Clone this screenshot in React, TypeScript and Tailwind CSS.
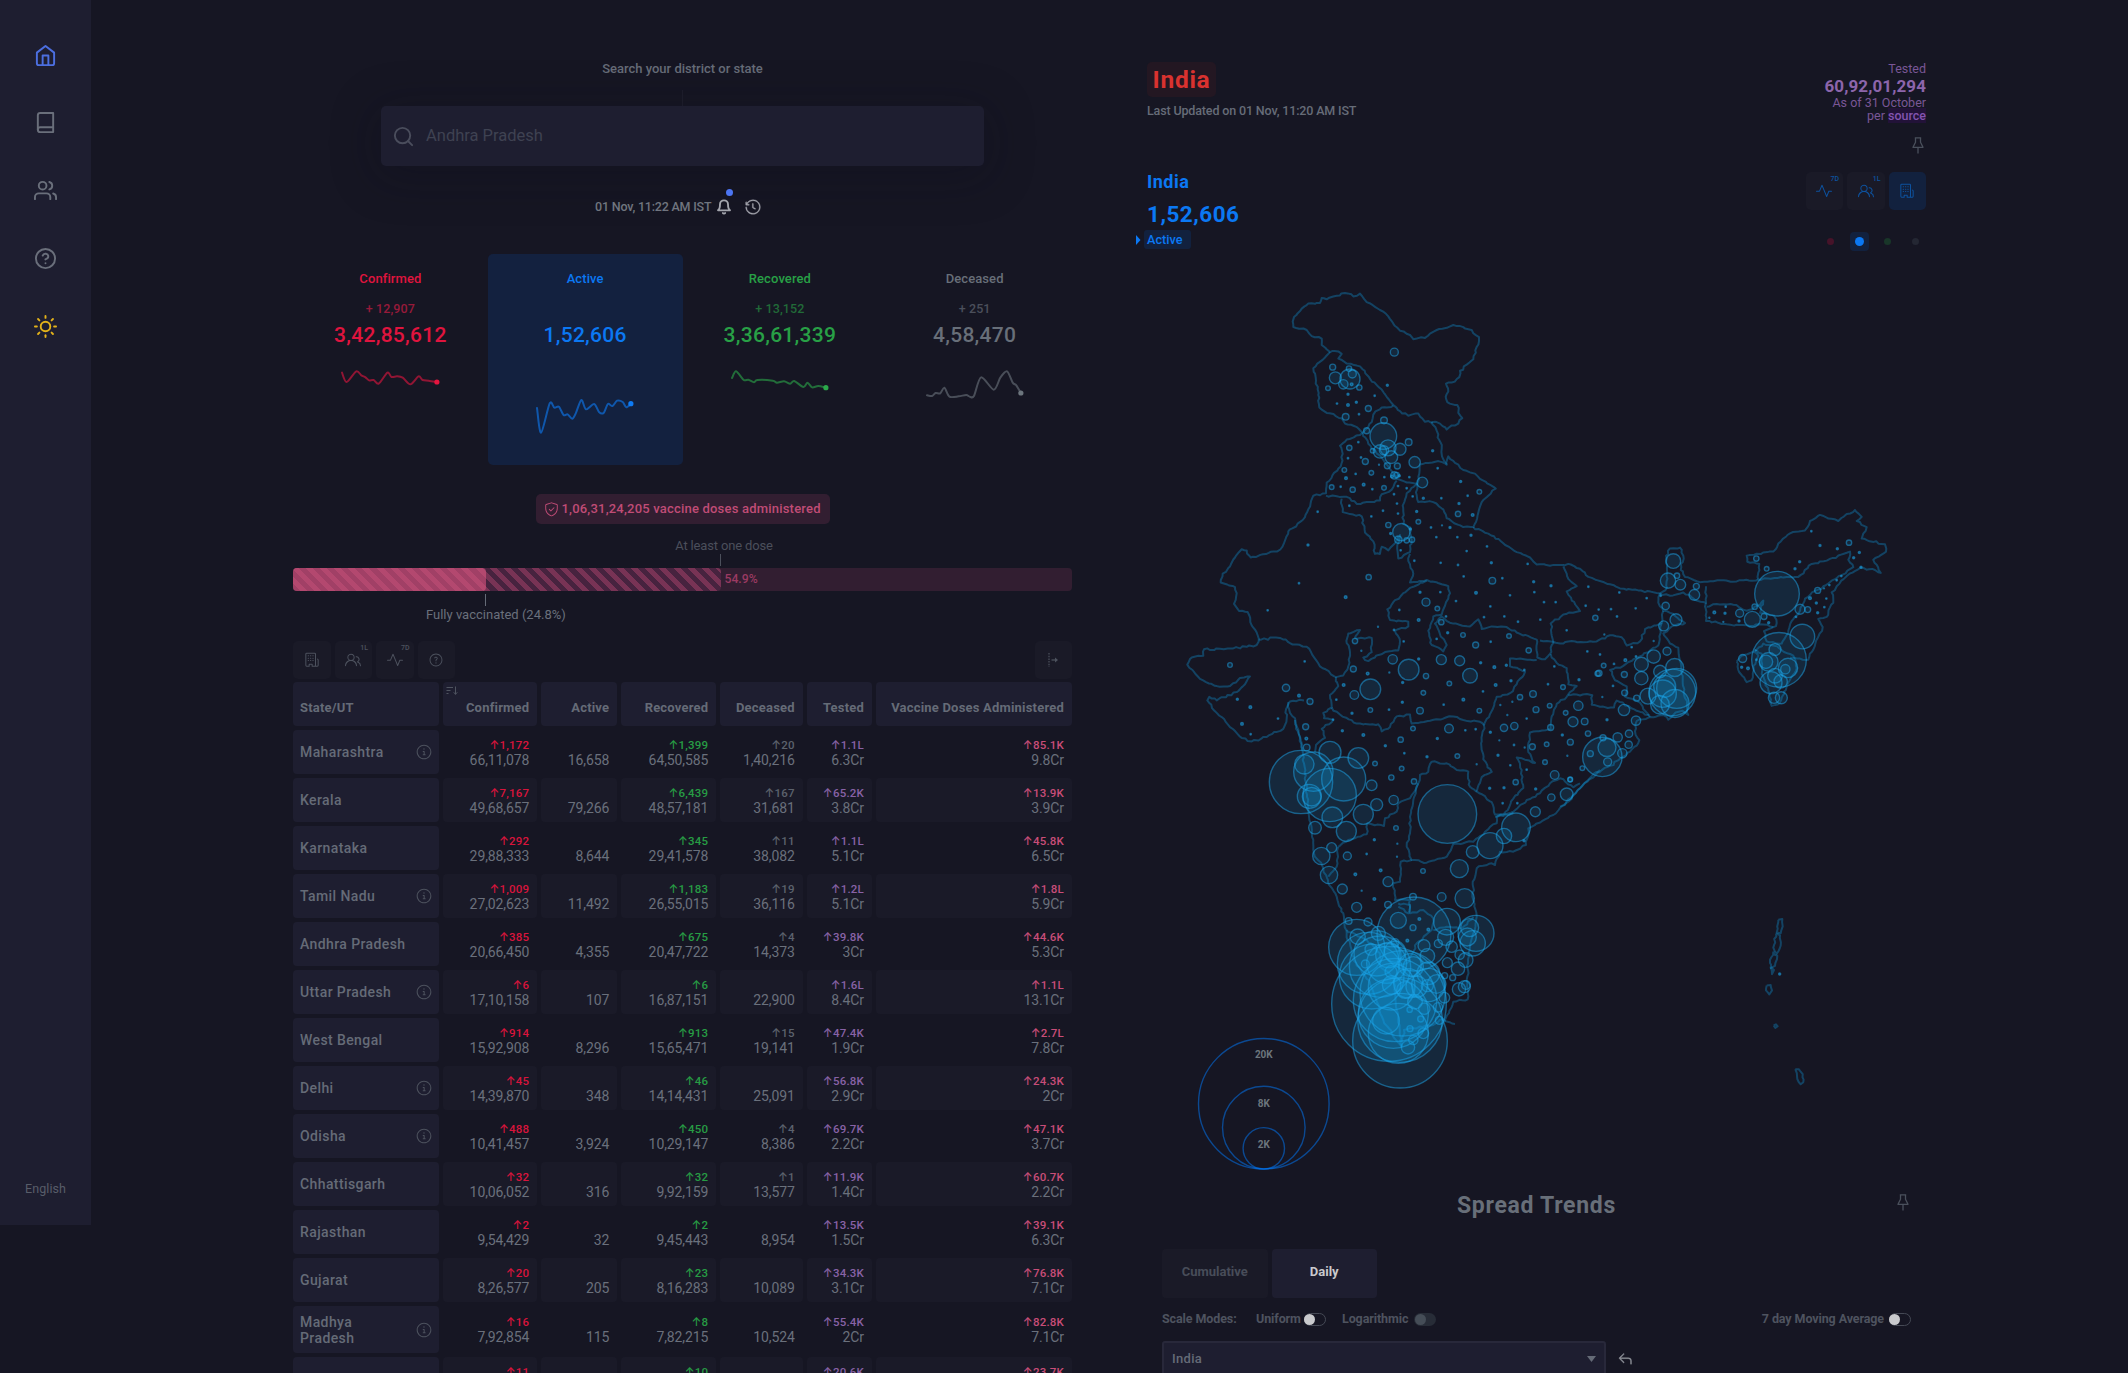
import React from "react";
import { FiBell, FiBook, FiHelpCircle, FiHome, FiSearch, FiSun, FiUsers } from "react-icons/fi";
import { GoHistory, GoInfo, GoOrganization, GoPeople, GoPulse, GoQuestion, GoReply, GoShieldCheck } from "react-icons/go";

type Pt = [number, number];
type Bubble = [number, number, number];

/* ---------- helpers ---------- */

function smooth(p: Pt[]): string {
  let d = `M${p[0][0]},${p[0][1]}`;
  for (let i = 0; i < p.length - 1; i++) {
    const a = p[Math.max(0, i - 1)];
    const b = p[i];
    const c = p[i + 1];
    const e = p[Math.min(p.length - 1, i + 2)];
    d += `C${b[0] + (c[0] - a[0]) / 7},${b[1] + (c[1] - a[1]) / 7} ${c[0] - (e[0] - b[0]) / 7},${c[1] - (e[1] - b[1]) / 7} ${c[0]},${c[1]}`;
  }
  return d;
}

function parse(s: string): Pt[] {
  return s.split(" ").map((q) => q.split(",").map(Number) as Pt);
}

function bubbles(s: string): Bubble[] {
  return s.split(" ").map((q) => q.split(",").map(Number) as Bubble);
}

/* Adds a small deterministic wobble so borders read as natural coastlines. */
function rough(points: Pt[]): string {
  let seed = 7;
  const rnd = () => {
    seed = (seed * 16807) % 2147483647;
    return seed / 2147483647 - 0.5;
  };
  let d = `M${points[0][0].toFixed(1)},${points[0][1].toFixed(1)}`;
  for (let i = 1; i < points.length; i++) {
    const [x0, y0] = points[i - 1];
    const [x1, y1] = points[i];
    const len = Math.hypot(x1 - x0, y1 - y0);
    const n = Math.max(1, Math.round(len / 3.2));
    for (let k = 1; k <= n; k++) {
      const t = k / n;
      const j = k === n ? 0 : 2;
      d += `L${(x0 + (x1 - x0) * t + rnd() * j).toFixed(1)},${(y0 + (y1 - y0) * t + rnd() * j).toFixed(1)}`;
    }
  }
  return d;
}

/* ---------- map data: each region has its own local grid ---------- */

const regions = [
  {
    ox: 1180,
    oy: 270,
    sy: 2.8,
    lines: [
      "340,152 342,132 365,108 385,94 420,92 425,78 440,82 470,72 495,64 520,74 540,66 560,90 600,112 625,130 640,150 660,170 690,182 700,194 735,190 750,178 770,168 820,154 850,160 875,168 897,188 890,215 880,250 860,265 840,282 838,300 815,315 798,318 805,340 797,355 802,370 832,378 835,400 847,415 835,430 815,435 800,447 780,430 765,425 735,425 715,402 685,408 660,395 640,378 620,355 605,335 570,305 540,270 500,262 475,248 485,235 475,228 450,230 425,210 425,192 395,185 380,168 340,160 340,152",
      "450,230 435,245 412,262 400,275 408,310 415,350 418,385 440,400 485,415 495,430 530,440 548,455 565,440 578,415 580,405 605,385 640,380",
      "548,455 540,462 500,475 480,492 488,515 482,550 440,595 438,625 400,632 385,670 368,700 325,732 312,765 292,788 212,805 200,785 185,782 165,805 150,830 128,850 122,875 165,888 170,905 162,935 178,955 203,958 215,995 230,1015 236,1040 230,1050 200,1055 150,1060 72,1062 70,1080 35,1085 22,1105 60,1145 110,1165 150,1165 180,1142 210,1138 195,1160 170,1182 110,1205 88,1195 82,1205 110,1240 150,1280 185,1310 215,1320 260,1308 310,1285 320,1255 318,1230 330,1208 372,1205",
      "325,1210 330,1240 345,1255 348,1285 360,1310 366,1345",
      "548,455 575,500 600,520 615,540 640,570 650,585 680,595 712,598 718,570 720,545 745,540 775,535 800,545 790,530 785,500 770,450 755,425",
      "438,632 500,635 530,655 560,650 600,645 605,628 635,615 650,590",
      "800,545 805,522 825,540 850,560 885,570 900,585 947,612 925,632 905,650 895,680 880,720 850,720 800,695 790,670 760,650 715,650 710,630 712,600",
      "485,640 488,678 520,685 545,690 555,735 580,760 585,795 600,795 605,775 625,785 645,765 655,745",
      "712,598 680,625 668,660 670,710 690,720 695,755 690,790 655,808 652,770 660,740",
      "690,795 685,815 700,850 690,875 740,868 785,880 805,885 810,905 795,940 785,965 760,970 745,1010 755,1050 790,1068 800,1050 780,1020 765,990 785,970 820,990 870,998 895,978 905,1005 935,998 980,1000 1010,1015 1070,1035 1072,1085 1095,1090 1110,1075 1120,1045 1112,990 1150,965 1200,955 1160,900 1190,885 1165,865 1150,830",
      "880,720 925,738 970,765 1010,790 1050,805 1070,825 1110,828 1152,826",
      "740,870 690,890 640,930 622,950 630,980 685,985 685,998 645,1010 660,1040 655,1065 615,1070 565,1095 550,1085 575,1070 575,1030 525,1030 540,1008 505,1018 500,1045 510,1070 505,1110 490,1135 468,1140 420,1110 380,1055 330,1045 300,1030 236,1035",
      "468,1140 475,1165 450,1190 455,1225 430,1240 432,1255 460,1260 425,1285 435,1310 408,1330 405,1350",
      "455,1225 480,1245 530,1270 595,1272 605,1292 630,1280 650,1250 690,1245 695,1270 750,1262 820,1250 850,1260 900,1265 912,1275",
      "912,1275 935,1235 950,1195 990,1185 1010,1160 1035,1125 990,1110 990,1088 1070,1092",
      "1112,1075 1130,1100 1160,1115 1165,1160 1190,1165 1160,1195 1130,1215 1115,1250 1112,1285 1050,1295 1045,1350 1065,1380 1010,1365 1025,1400 1030,1450 1000,1480 970,1525 945,1525 935,1490 890,1460 905,1420 935,1405 910,1370 905,1320 912,1275",
    ],
    bubbles: bubbles(
      "643,230,12 622,323,5 584,352,4 458,272,9 507,276,8 466,302,18 510,305,30 517,291,12 490,320,14 515,320,6 538,329,8 444,331,7 504,348,5 471,374,4 504,378,6 529,370,5 565,388,9 537,404,4 497,411,10 612,421,10 560,450,9 610,465,40 624,498,24 600,508,20 634,524,19 660,502,18 578,506,7 612,505,14 686,482,10 704,538,17 727,595,16 758,506,5 773,555,4 508,498,8 535,482,4 504,527,4 543,525,4 556,536,9 597,545,3 622,548,9 652,549,9 493,560,7 527,571,4 498,583,6 574,568,7 643,575,11 650,574,8 658,576,5 613,580,4 636,578,6 688,580,4 482,607,4 455,608,7 518,615,8 551,601,6 577,614,4 612,610,7 654,605,4 680,611,4 842,592,5 898,621,7 863,632,4 784,639,4 730,639,5 698,634,4 837,654,5 878,686,6 834,683,8 642,628,4 508,660,4 651,654,4 609,674,4 654,682,4 710,676,5 574,690,4 413,677,4 715,705,7 625,714,8 664,734,26 655,755,11 680,757,8 696,755,8 632,738,5 691,725,5 786,715,3 810,721,5 753,721,4 769,748,4 832,748,4 873,743,5 921,774,4 860,787,4 703,814,4 662,785,4 384,770,5 357,877,4 263,953,4 566,860,8 497,916,6 782,820,4 834,826,4 934,820,5 1043,823,4 851,858,4 937,870,10 967,863,4 1061,873,5 1113,884,5 888,904,6 990,911,4 1063,902,4 1092,930,4 1127,930,4 931,942,4 828,927,4 781,902,4 720,902,5 738,930,12 658,952,4 772,948,7 716,980,6 784,986,8 798,970,4 912,972,4 973,970,4 1014,985,4 1081,979,4 1225,887,4 1217,940,4 1246,974,8 1160,1009,4 1222,1068,4 1253,1130,8 987,1025,7 932,1041,4 887,1050,9 849,1022,7 803,1016,5 770,1033,4 594,999,3 671,1040,4 642,1008,4 525,1039,8 544,1066,3 374,1096,4 150,1106,7 1046,1065,8 716,1089,5 638,1090,14 784,1091,15 839,1094,15 902,1100,5 943,1112,6 979,1107,5 1033,1120,4 1123,1110,4 520,1117,9 563,1130,6 628,1127,3 686,1119,31 738,1137,8 870,1136,22 993,1150,5 947,1162,6 1104,1160,4 1149,1168,7 1197,1147,5 808,1158,7 668,1155,5 491,1162,6 571,1174,31 523,1190,13 469,1203,4 318,1170,11 172,1202,5 357,1192,6 390,1208,9 211,1224,6 186,1271,6 294,1256,4 212,1300,4 730,1184,7 909,1180,4 850,1203,6 667,1210,5 791,1217,4 1020,1196,8 1059,1187,10 997,1209,3 961,1218,3 898,1234,7 720,1234,10 627,1231,4 571,1232,7 516,1241,5 459,1259,4 1068,1231,9 1109,1220,7 1195,1220,14 1157,1240,7 1179,1265,15 1214,1264,10 1040,1256,4 982,1246,3 1003,1277,11 972,1282,11 1112,1281,9 1147,1302,5 1224,1298,8 1171,1322,9 1162,1360,3 1100,1328,7 1057,1335,9 1034,1337,3 1002,1330,4 958,1317,3 931,1294,5 887,1286,4 856,1289,4 807,1284,13 699,1284,7 772,1312,5 662,1315,8 616,1332,5 550,1302,6 487,1290,5 377,1279,9 379,1312,6 380,1337,10 673,1353,4 741,1363,5 832,1361,7 890,1384,3 954,1359,5 991,1387,4 1095,1378,7 1040,1399,4 665,1396,7 585,1382,7 634,1421,8 702,1432,8 929,1451,5 972,1450,5 1007,1434,8 1067,1453,5 1170,1427,7 1124,1414,13 1160,1468,19 1114,1477,11 1066,1517,15 1012,1493,4 968,1493,4 1207,1395,7"
    ),
  },
  {
    ox: 1560,
    oy: 470,
    sy: 2.45,
    lines: [
      "12,234 25,230 60,242 85,262 150,280 180,290 235,295 300,302 320,290",
      "322,290 318,210 330,192 360,190 370,210 362,245 375,262 420,275 480,270 530,273 595,268",
      "595,268 598,230 562,225 560,210 590,205 640,200 655,180 690,155 735,148 750,125 780,110 835,125 860,108 885,98 905,115 890,125 920,140 905,168 975,182 978,200 940,220 962,252 945,245 900,240 860,260 830,285 815,300 820,325 800,360 775,365 788,385 760,440 745,465 720,462 690,460",
      "595,268 680,262 715,262 755,230 800,222 870,200 865,220 880,238 830,265 790,285 735,315 720,345 695,370 685,400 665,425 620,420 612,395 640,385 650,375 640,355",
      "300,302 330,308 370,300 410,320 438,325 438,285",
      "440,335 470,328 520,330 560,345 600,330 610,320 600,350 640,355",
      "438,325 438,370 500,378 570,382 600,378 640,385",
      "530,470 545,455 580,445 595,455 580,480 575,515 560,520 535,490 530,470",
      "590,440 605,450 605,500 625,540 635,578 660,570 680,530 710,485 700,455 640,430 610,425 590,440",
      "300,302 295,325 310,345 330,350 375,375 345,380 310,400 330,425 355,435 358,460 368,520 385,600 368,590 340,600 325,612 310,600 270,605 230,615 225,640 238,662 210,690 150,725 100,745 60,780 20,815 0,825",
      "310,345 305,375 255,390 240,420 200,430 185,410 150,405 110,420 70,422 25,420 0,425 -60,418",
      "305,375 295,430 230,460 190,480 150,490 165,515 200,530 195,555 240,570 270,605",
      "268,600 230,590 170,565 162,582 120,580 95,575 97,552 50,550 25,552",
      "655,1102 667,1100 668,1118 662,1135 650,1133 655,1102",
      "648,1135 660,1140 662,1165 650,1185 640,1170 648,1135",
      "640,1180 652,1190 645,1215 632,1220 630,1200 640,1180",
      "632,1218 642,1225 636,1235 632,1218",
      "620,1263 632,1262 636,1275 628,1285 618,1275 620,1263",
      "641,1361 648,1358 653,1363 646,1367 641,1361",
      "706,1468 716,1468 728,1480 730,1500 722,1505 712,1492 706,1468",
    ],
    bubbles: bubbles(
      "340,223,22 324,271,23 361,281,16 351,259,8 403,306,16 409,285,9 317,333,11 348,367,18 311,382,15 302,308,4 260,314,4 178,300,4 116,342,4 153,341,4 227,339,4 171,359,4 133,403,3 215,434,4 281,419,3 228,457,4 120,452,4 196,466,6 162,475,4 131,479,7 117,498,9 193,501,9 159,529,4 127,556,3 194,546,9 230,559,9 141,612,5 192,588,17 228,614,14 129,656,9 173,655,14 207,646,11 206,673,11 187,694,14 127,703,59 141,680,27 91,695,9 143,715,12 31,758,7 244,476,21 281,457,20 321,444,12 244,510,20 344,484,27 300,494,19 264,554,24 314,530,33 308,548,41 300,575,28 337,545,70 350,535,60 345,572,42 618,470,20 587,442,4 589,217,8 620,242,7 719,225,5 705,242,5 754,150,4 780,185,5 832,193,5 867,178,8 898,202,5 881,215,5 903,238,5 844,260,4 830,270,4 808,282,4 792,290,3 773,295,9 750,314,6 799,315,4 793,336,4 769,326,5 773,350,5 743,342,9 720,341,15 708,360,4 651,303,67 584,335,8 577,366,24 612,359,9 626,374,5 539,351,12 537,370,5 495,351,5 497,335,4 490,372,3 463,349,6 448,362,3 727,408,37 657,465,82 645,440,18 626,470,28 548,462,12 545,483,5 564,486,6 589,465,4 684,485,29 676,488,14 633,521,33 645,504,22 662,518,20 642,558,17 664,558,18 659,1235,5"
    ),
  },
  {
    ox: 1180,
    oy: 700,
    sy: 3,
    lines: [
      "345,60 360,110 372,190 385,330 395,400 402,460 430,505 445,550 470,590 490,640 500,700 520,780 570,850 610,960 640,1010 665,1040 672,990 700,985 760,975 790,958 825,972",
      "795,965 820,905 863,898 862,850 865,760 880,700 890,650 880,600 878,545 890,505 935,490 945,495 960,455 1000,455 1038,435 1045,385 1120,345 1200,265 1260,210",
      "475,440 505,420 560,403 562,370 612,378 615,355 650,335 655,310 690,295 715,250 720,225 745,215 755,185 800,190 830,210 865,215 870,260 890,275",
      "715,250 700,300 690,350 690,400 680,440 695,480 740,488 800,470 820,432 880,425 915,395 950,370 950,350 1000,340",
      "695,480 662,485 660,545 640,550 645,600 690,600 690,640 730,630 760,655 755,690 710,730 700,755 680,790 650,800",
      "655,610 690,615 685,640 655,620",
      "945,350 1000,335 1040,300 1080,280 1110,250 1140,235 1180,262 1200,250",
      "475,440 470,500 445,530",
      "500,690 560,720 600,760 600,800 640,830 650,930 665,1040",
      "760,690 800,680 845,685 880,650",
    ],
    bubbles: bubbles(
      "363,246,95 400,215,59 373,193,29 450,157,33 535,174,31 491,237,66 449,285,80 388,289,36 395,290,28 457,352,31 499,394,30 550,343,30 575,256,16 590,314,18 641,300,14 405,383,19 455,443,15 424,468,26 502,468,12 447,525,26 487,567,15 530,622,15 583,419,5 648,384,7 652,431,3 560,462,4 651,470,3 526,523,6 602,511,6 545,572,3 583,597,6 624,545,15 729,513,7 624,614,10 699,590,10 785,591,13 802,342,88 838,506,27 878,456,19 930,437,39 972,408,23 1008,382,43 1032,422,5 854,595,29 801,665,40 702,702,111 655,661,24 718,657,6 699,683,9 745,689,6 682,722,6 506,663,10 564,666,12 888,700,54 869,683,27 878,730,38 862,711,27 797,712,24 732,737,18 775,731,12 815,740,17 742,768,22 839,764,14 857,780,22 802,788,15 834,806,20 794,827,9 818,833,9 837,868,20 853,860,18 858,855,13 745,820,34 770,852,28 793,893,16 733,926,17 774,922,14 778,961,12 722,957,9 689,929,8 690,986,9 730,1000,16 700,1020,14 684,1042,20 742,857,18 530,742,84 533,710,23 595,700,21 645,728,12 556,792,12 573,748,18 565,790,93 600,800,92 575,830,97 590,760,68 625,765,38 645,755,32 690,795,34 700,800,30 620,790,60 633,815,18 627,912,172 645,900,125 668,880,128 660,960,127 640,940,105 655,1000,90 635,860,70 635,855,28 685,850,44 675,870,25 618,962,40 660,1022,142 710,860,32 745,855,50 705,905,22"
    ),
  },
];

function IndiaMap() {
  return (
    <svg className="block h-[913px] w-[779px] overflow-visible" viewBox="1147 262 779 913">
      <g fill="none" stroke="#10a0e6" strokeOpacity="0.33" strokeWidth="2" strokeLinejoin="round">
        {regions.map((r, i) =>
          r.lines.map((l, j) => (
            <path key={`${i}-${j}`} d={rough(parse(l).map(([x, y]) => [r.ox + x / 3, r.oy + y / r.sy] as Pt))} />
          ))
        )}
      </g>
      <g fill="#10a8f0" fillOpacity="0.125" stroke="#1ea8ec" strokeOpacity="0.5" strokeWidth="1.4">
        {regions.map((r, i) =>
          r.bubbles.map(([x, y, s], j) => (
            <circle
              key={`${i}-${j}`}
              cx={r.ox + x / 3}
              cy={r.oy + y / r.sy}
              r={s < 7 ? Math.max(0.5, s / 3 - 0.6) : s / 3}
              fillOpacity={s < 7 ? 0.4 : undefined}
            />
          ))
        )}
      </g>
      <g fill="none" stroke="#007bff" strokeOpacity="0.5" strokeWidth="1.4">
        <circle cx="1263.8" cy="1103.8" r="65.3" />
        <circle cx="1263.8" cy="1127.6" r="41.3" />
        <circle cx="1263.8" cy="1148.3" r="20.7" />
      </g>
      <g className="font-['Roboto',sans-serif] text-[10px] font-bold" fill="#6c757d" textAnchor="middle">
        <text x="1263.8" y="1058">20K</text>
        <text x="1263.8" y="1106.5">8K</text>
        <text x="1263.8" y="1147.8">2K</text>
      </g>
    </svg>
  );
}

/* ---------- small parts ---------- */

function Spark({ data, color }: { data: string; color: string }) {
  const raw = parse(data);
  const x0 = raw[0][0];
  const pts = raw.map(([x, y]) => [(x - x0) / 1.96 + 2, (y - 1005) / 3] as Pt);
  const end = pts[pts.length - 1];
  return (
    <svg className="mt-[18px] block h-[75px] w-[100px]" viewBox="0 0 100 75">
      <path d={smooth(pts)} fill="none" stroke={color} strokeOpacity="0.6" strokeWidth="2" strokeLinecap="round" />
      <circle cx={end[0]} cy={end[1]} r="2.6" fill={color} />
    </svg>
  );
}

function Pin() {
  return (
    <svg width="12" height="17" viewBox="0 0 12 17" fill="none" stroke="#4a505c" strokeWidth="1.3" strokeLinejoin="round">
      <path d="M2.800 .8h6.400M3.500 .8v4.400L1 10.300h10L8.500 5.200V.8M6 10.500V16.500" />
    </svg>
  );
}

const stats = [
  { name: "Confirmed", delta: "+ 12,907", total: "3,42,85,612", color: "#e5153f", text: "text-[#e0143e]", dim: "text-[#961a3a]", bg: "",
    data: "122,1028 131,1056 150,1024 160,1036 168,1042 175,1051 184,1050 194,1061 211,1028 219,1041 230,1039 241,1043 256,1063 272,1039 280,1050 292,1052 308,1056" },
  { name: "Active", delta: "", total: "1,52,606", color: "#0e7bf5", text: "text-[#0b78f3]", dim: "", bg: "bg-[#13213f]",
    data: "506,1134 514,1208 531,1120 540,1133 549,1130 558,1155 566,1153 575,1166 582,1150 593,1110 602,1138 618,1122 628,1147 637,1148 645,1122 654,1128 663,1112 674,1116 681,1132 690,1121" },
  { name: "Recovered", delta: "+ 13,152", total: "3,36,61,339", color: "#2ba84a", text: "text-[#28a046]", dim: "text-[#216a38]", bg: "",
    data: "886,1044 894,1024 909,1050 918,1049 929,1057 936,1050 966,1052 974,1058 988,1054 1000,1061 1008,1053 1026,1071 1034,1058 1043,1072 1055,1068 1070,1073" },
  { name: "Deceased", delta: "+ 251", total: "4,58,470", color: "#6c757d", text: "text-[#686f79]", dim: "text-[#4b4f5b]", bg: "",
    data: "1268,1096 1278,1098 1285,1089 1294,1090 1302,1073 1312,1100 1330,1099 1345,1095 1352,1100 1360,1098 1374,1042 1399,1079 1412,1042 1425,1024 1436,1058 1443,1066 1452,1089" },
];

/* state | info | confirmed | active | recovered | deceased | tested | vaccines */
const rows: string[][] = [
  ["Maharashtra", "i", "1,172", "66,11,078", "16,658", "1,399", "64,50,585", "20", "1,40,216", "1.1L", "6.3Cr", "85.1K", "9.8Cr"],
  ["Kerala", "", "7,167", "49,68,657", "79,266", "6,439", "48,57,181", "167", "31,681", "65.2K", "3.8Cr", "13.9K", "3.9Cr"],
  ["Karnataka", "", "292", "29,88,333", "8,644", "345", "29,41,578", "11", "38,082", "1.1L", "5.1Cr", "45.8K", "6.5Cr"],
  ["Tamil Nadu", "i", "1,009", "27,02,623", "11,492", "1,183", "26,55,015", "19", "36,116", "1.2L", "5.1Cr", "1.8L", "5.9Cr"],
  ["Andhra Pradesh", "", "385", "20,66,450", "4,355", "675", "20,47,722", "4", "14,373", "39.8K", "3Cr", "44.6K", "5.3Cr"],
  ["Uttar Pradesh", "i", "6", "17,10,158", "107", "6", "16,87,151", "", "22,900", "1.6L", "8.4Cr", "1.1L", "13.1Cr"],
  ["West Bengal", "", "914", "15,92,908", "8,296", "913", "15,65,471", "15", "19,141", "47.4K", "1.9Cr", "2.7L", "7.8Cr"],
  ["Delhi", "i", "45", "14,39,870", "348", "46", "14,14,431", "", "25,091", "56.8K", "2.9Cr", "24.3K", "2Cr"],
  ["Odisha", "i", "488", "10,41,457", "3,924", "450", "10,29,147", "4", "8,386", "69.7K", "2.2Cr", "47.1K", "3.7Cr"],
  ["Chhattisgarh", "", "32", "10,06,052", "316", "32", "9,92,159", "1", "13,577", "11.9K", "1.4Cr", "60.7K", "2.2Cr"],
  ["Rajasthan", "", "2", "9,54,429", "32", "2", "9,45,443", "", "8,954", "13.5K", "1.5Cr", "39.1K", "6.3Cr"],
  ["Gujarat", "", "20", "8,26,577", "205", "23", "8,16,283", "", "10,089", "34.3K", "3.1Cr", "76.8K", "7.1Cr"],
  ["Madhya Pradesh", "i", "16", "7,92,854", "115", "8", "7,82,215", "", "10,524", "55.4K", "2Cr", "82.8K", "7.1Cr"],
  ["Haryana", "", "11", "7,71,252", "126", "10", "7,61,077", "", "10,049", "20.6K", "1.3Cr", "23.7K", "2.5Cr"],
];

const headers = ["Confirmed", "Active", "Recovered", "Deceased", "Tested", "Vaccine Doses Administered"];
const gridCols = "grid grid-cols-[146px_94.300px_76px_95px_82.500px_65.200px_1fr] gap-x-1";

function Cell({ delta, value, color, shade }: { delta?: string; value: string; color?: string; shade: boolean }) {
  return (
    <div className={`flex flex-col items-end justify-center rounded-[4px] pr-2 ${shade ? "bg-[#1a1a28]" : ""}`}>
      <span className={`h-[14px] text-[11.5px] font-medium leading-[14px] tracking-[0.2px] ${color ?? ""}`}>{delta ? `↑${delta}` : ""}</span>
      <span className="h-[15px] text-[14px] leading-[16px] tracking-[-0.1px] text-[#6a707c]">{value}</span>
    </div>
  );
}

function ToolButton({ children, tag, blue, on, right }: { children?: React.ReactNode; tag?: string; blue?: boolean; on?: boolean; right?: boolean }) {
  return (
    <div
      className={`relative flex h-[38px] w-[37.500px] shrink-0 items-center justify-center rounded-[5px] ${on ? "bg-[#12213e]" : "bg-[#1a1a27]"} ${blue ? "text-[#0d529f]" : "text-[#4d525e]"} ${right ? "ml-auto" : ""}`}
    >
      {children}
      {tag && <span className="absolute right-[4px] top-[3px] text-[7px] font-medium leading-[9px]">{tag}</span>}
    </div>
  );
}

function Toggle({ muted }: { muted?: boolean }) {
  return muted ? (
    <span className="flex h-[13px] w-[22px] shrink-0 items-center rounded-full bg-[#272c37] pl-px">
      <span className="h-[11px] w-[11px] rounded-full bg-[#454d57]" />
    </span>
  ) : (
    <span className="flex h-[13px] w-[22px] shrink-0 items-center rounded-full border-[1.500px] border-[#454955]">
      <span className="-ml-px h-[11px] w-[11px] shrink-0 rounded-full bg-[#c9cacd]" />
    </span>
  );
}

/* ---------- page ---------- */

function Sidebar() {
  return (
    <nav className="flex h-[1225px] w-[91px] shrink-0 flex-col items-center bg-[#1e1e30] pt-[43.500px] text-[#6a6f7b]">
      <FiHome size={23} className="mb-[44.800px] shrink-0 text-[#4c6fe0]" />
      <FiBook size={23} className="mb-[44.800px] shrink-0" />
      <FiUsers size={23} className="mb-[44.800px] shrink-0" />
      <FiHelpCircle size={23} className="mb-[44.800px] shrink-0" />
      <FiSun size={23} className="shrink-0 text-[#e3b21a]" />
      <span className="mb-[26px] mt-auto text-[12.500px] leading-5 tracking-[0.1px] text-[#585d69]">English</span>
    </nav>
  );
}

function LeftColumn() {
  return (
    <section className="ml-[202px] flex w-[779px] shrink-0 flex-col pt-[59px] [&>*]:shrink-0">
      <div className="h-5 text-center text-[13px] font-medium leading-5 text-[#666c78]">Search your district or state</div>
      <div className="mx-auto mt-[11px] h-4 w-px bg-[#1e1e2c]" />
      <div className="mx-auto flex h-[60px] w-[603px] items-center rounded-[5px] bg-[#1e1e30] pl-[11px] shadow-[0_7px_45px_8px_rgba(15,15,28,0.22)]">
        <FiSearch size={23} className="text-[#4a4d5c]" />
        <span className="ml-[11px] text-[16.500px] text-[#3f4252]">Andhra Pradesh</span>
      </div>
      <div className="mt-[31px] flex h-5 items-center pl-[302px] text-[12.500px] font-medium leading-5 tracking-[-0.2px] text-[#70757f]">
        <span className="w-[114px] whitespace-nowrap">01 Nov, 11:22 AM IST</span>
        <span className="relative ml-[7px]">
          <FiBell size={16} strokeWidth={2.8} className="text-[#a3a5ad]" />
          <span className="absolute -right-px -top-[10px] h-[7px] w-[7px] rounded-full bg-[#4c75f2]" />
        </span>
        <GoHistory size={16} strokeWidth={0.5} className="ml-[13px] text-[#a3a5ad]" />
      </div>

      <div className="mt-[37px] grid h-[211px] grid-cols-4">
        {stats.map((s) => (
          <div key={s.name} className={`flex flex-col items-center rounded-[5px] pt-[17px] ${s.bg}`}>
            <span className={`h-4 text-[13px] font-medium leading-4 tracking-[0.1px] ${s.text}`}>{s.name}</span>
            <span className={`mt-[14px] h-4 text-[12.500px] font-medium leading-4 tracking-[0.1px] ${s.dim}`}>{s.delta}</span>
            <span className={`mt-[6px] h-6 text-[21px] font-medium leading-6 tracking-[0.3px] ${s.text}`}>{s.total}</span>
            <Spark data={s.data} color={s.color} />
          </div>
        ))}
      </div>

      <div className="mx-auto mt-[29px] flex h-[30px] w-[294px] items-center rounded-[5px] bg-[#321e31] pl-2 text-[#c04c76]">
        <GoShieldCheck size={15} />
        <span className="ml-[3px] whitespace-nowrap text-[13px] font-medium tracking-[0.2px]">1,06,31,24,205 vaccine doses administered</span>
      </div>
      <div className="ml-[378px] mt-[14px] h-4 w-[106px] text-center text-[13px] leading-4 tracking-[-0.150px] text-[#4b4f5b]">At least one dose</div>
      <div className="ml-[427px] h-[12px] w-px bg-[#4b4f5b]" />
      <div className="mt-[2px] flex h-[23px] w-full rounded-[4px] bg-[#321e31]">
        <div className="h-full w-[427.500px] rounded-[4px] bg-[repeating-linear-gradient(45deg,#47233f,#47233f_5px,#783355_5px,#783355_10px)]">
          <div className="h-full w-[193px] rounded-[4px] bg-[repeating-linear-gradient(45deg,#a14066,#a14066_5px,#b3486f_5px,#b3486f_10px)]" />
        </div>
        <span className="ml-1 text-[12.200px] font-medium leading-[23px] text-[#9b3a62]">54.9%</span>
      </div>
      <div className="ml-[192px] mt-[3px] h-3 w-px bg-[#656b77]" />
      <div className="ml-[123px] mt-px h-4 w-[160px] whitespace-nowrap pl-[10px] text-[13px] leading-4 text-[#6a707c]">Fully vaccinated (24.8%)</div>

      <div className="mt-[18px] flex h-[38px] gap-[4px]">
        <ToolButton><GoOrganization size={16} /></ToolButton>
        <ToolButton tag="1L"><GoPeople size={16} /></ToolButton>
        <ToolButton tag="7D"><GoPulse size={16} /></ToolButton>
        <ToolButton><GoQuestion size={14} /></ToolButton>
        <ToolButton right>
          <svg width="12" height="16" viewBox="0 0 12 16" fill="none" stroke="currentColor">
            <path d="M2 1v14" strokeDasharray="1.5 1.2" strokeWidth="1.2" />
            <path d="M4.500 8h5.500" strokeWidth="1.3" />
            <path d="M8 5.500L11 8 8 10.500z" fill="currentColor" stroke="none" />
          </svg>
        </ToolButton>
      </div>

      <div className={`mt-[3px] h-[44px] ${gridCols} text-[13px] font-bold text-[#656b77]`}>
        <div className="flex items-end rounded-[4px] bg-[#1e1e30] pb-[8px] pl-[7px] leading-5 tracking-[0.2px]">State/UT</div>
        {headers.map((h, i) => (
          <div key={h} className="relative flex items-end justify-end rounded-[4px] bg-[#1e1e30] pb-[8px] pr-2 leading-5 tracking-[0.2px]">
            {i === 0 && (
              <svg className="absolute left-[3px] top-[4px]" width="12" height="9" viewBox="0 0 12 9" fill="none" stroke="#4f5460" strokeWidth="1">
                <path d="M.5 1.500h6.500M.5 4.500h4M.5 7.500h2M9.500 .5v8M7.700 6.300l1.800 2 1.800-2" />
              </svg>
            )}
            <span className="whitespace-nowrap">{h}</span>
          </div>
        ))}
      </div>
      {rows.map((r, i) => {
        const shade = i % 2 === 1;
        return (
          <div key={r[0]} className={`mt-1 ${i === 12 ? "h-[47px]" : "h-[44px]"} ${gridCols}`}>
            <div className="flex items-center justify-between rounded-[4px] bg-[#1e1e30] pl-[7px] pr-[7px] text-[14px] font-medium leading-4 tracking-[0.400px] text-[#656b77]">
              <span className={i === 12 ? "w-[70px]" : "whitespace-nowrap"}>{r[0]}</span>
              {r[1] && <GoInfo size={16} className="text-[#4d525e]" />}
            </div>
            <Cell delta={r[2]} value={r[3]} color="text-[#d8143c]" shade={shade} />
            <Cell value={r[4]} shade={shade} />
            <Cell delta={r[5]} value={r[6]} color="text-[#279c44]" shade={shade} />
            <Cell delta={r[7]} value={r[8]} color="text-[#5c626d]" shade={shade} />
            <Cell delta={r[9]} value={r[10]} color="text-[#8862a6]" shade={shade} />
            <Cell delta={r[11]} value={r[12]} color="text-[#c84d78]" shade={shade} />
          </div>
        );
      })}
    </section>
  );
}

function RightColumn() {
  return (
    <section className="ml-[75px] flex w-[779px] shrink-0 flex-col pt-[62px] [&>*]:shrink-0">
      <div className="flex h-[110px] justify-between">
        <div>
          <div className="flex h-[35px] w-[69px] items-center justify-center rounded-[5px] bg-[#231722] text-[24.500px] font-bold leading-[35px] tracking-[0.700px] text-[#d9322f]">India</div>
          <div className="mt-[6px] h-4 whitespace-nowrap text-[12.500px] font-medium leading-4 tracking-[-0.150px] text-[#666c78]">Last Updated on 01 Nov, 11:20 AM IST</div>
        </div>
        <div className="flex flex-col items-end text-[12.500px] text-[#7a5696]">
          <span className="h-[14px] leading-[14px]">Tested</span>
          <span className="mt-px h-[18px] text-[17px] font-bold leading-[18px] tracking-[0.100px] text-[#8c65ab]">60,92,01,294</span>
          <span className="mt-px h-[13px] leading-[13px]">As of 31 October</span>
          <span className="h-[14px] leading-[14px]">per <span className="bg-[#221238] font-medium text-[#8354b0]">source</span></span>
          <span className="mr-[2px] mt-[14px]"><Pin /></span>
        </div>
      </div>
      <div className="flex h-[90px] justify-between">
        <div className="flex flex-col text-[#0b78f3]">
          <span className="h-5 text-[18px] font-bold leading-5 tracking-[0.5px]">India</span>
          <span className="mt-[10px] h-6 text-[22.500px] font-bold leading-6 tracking-[0.5px]">1,52,606</span>
          <div className="-ml-[11px] mt-[4px] flex items-center">
            <svg width="5" height="10" viewBox="0 0 5 10" fill="#0b78f3"><path d="M0 0l4.500 5L0 10z" /></svg>
            <span className="ml-[3px] h-[19px] w-[47px] rounded-[3px] bg-[#12213e] pl-[3px] text-[12.700px] font-medium leading-[19px]">Active</span>
          </div>
        </div>
        <div className="flex flex-col items-end">
          <div className="flex gap-[4px]">
            <ToolButton tag="7D" blue><GoPulse size={16} /></ToolButton>
            <ToolButton tag="1L" blue><GoPeople size={16} /></ToolButton>
            <ToolButton blue on><GoOrganization size={16} /></ToolButton>
          </div>
          <div className="mr-[7px] mt-[22px] flex h-[19px] items-center">
            <span className="h-[7px] w-[7px] rounded-full bg-[#461329]" />
            <span className="ml-[16px] flex h-[19px] w-[19px] items-center justify-center rounded-[4px] bg-[#12213e]">
              <span className="h-[9.500px] w-[9.500px] rounded-full bg-[#0b78f3]" />
            </span>
            <span className="ml-[15px] h-[7px] w-[7px] rounded-full bg-[#193629]" />
            <span className="ml-[21px] h-[7px] w-[7px] rounded-full bg-[#242733]" />
          </div>
        </div>
      </div>

      <IndiaMap />

      <div className="relative mt-[17px] flex h-[27px] justify-center">
        <h2 className="text-[23px] font-bold leading-[27px] tracking-[0.700px] text-[#686f79]">Spread Trends</h2>
        <span className="absolute right-[17px] top-[2px]"><Pin /></span>
      </div>
      <div className="mt-[30px] flex h-[49px] gap-1 pl-[15px] text-[13px] font-bold">
        <div className="flex w-[105.500px] items-center justify-center rounded-[4px] bg-[#1a1a27] pb-1 text-[#484d59]">Cumulative</div>
        <div className="flex w-[105.500px] items-center justify-center rounded-[4px] bg-[#1e1e30] pb-1 text-[#c9cacd]">Daily</div>
      </div>
      <div className="mt-[13px] flex h-4 items-center pl-[15px] pr-[15px] text-[12.500px] font-bold leading-4 tracking-[-0.100px] text-[#4e535f]">
        <span className="w-[94px]">Scale Modes:</span>
        <span className="w-[48px]">Uniform</span>
        <Toggle />
        <span className="ml-[16px] w-[72px]">Logarithmic</span>
        <Toggle muted />
        <span className="ml-auto mr-[5px]">7 day Moving Average</span>
        <Toggle />
      </div>
      <div className="mt-[14px] flex h-[36px] items-center pl-[15px]">
        <div className="flex h-[36px] w-[444px] items-center justify-between rounded-[3px] border-2 border-[#28283a] bg-[#1e1e30] pl-[8px] pr-[8px] text-[13px] font-medium tracking-[0.300px] text-[#656b77]">
          <span>India</span>
          <svg width="9" height="6" viewBox="0 0 9 6" fill="#656b77"><path d="M0 0h9L4.500 6z" /></svg>
        </div>
        <GoReply size={16} strokeWidth={0.6} className="ml-[11px] text-[#8d9098]" />
      </div>
    </section>
  );
}

export default function App() {
  return (
    <div className="flex h-[1373px] w-[2128px] overflow-hidden bg-[#161623] font-['Roboto','Inter',sans-serif]">
      <Sidebar />
      <LeftColumn />
      <RightColumn />
    </div>
  );
}
